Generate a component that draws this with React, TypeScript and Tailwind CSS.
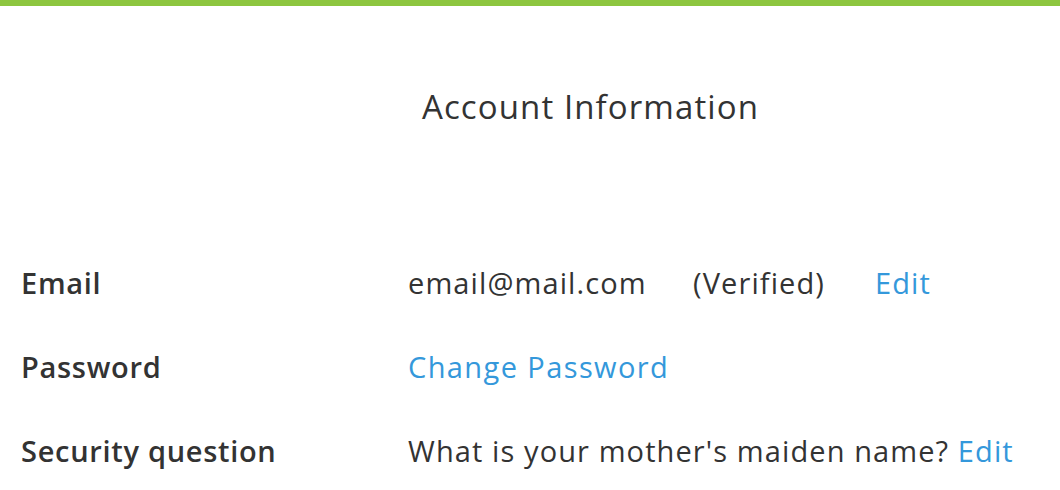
import React from "react";

const rows = [
  { label: "Email" },
  { label: "Password" },
  { label: "Security question" },
];

export default function App() {
  return (
    <div className="h-[490px] w-[1060px] overflow-hidden bg-white text-[#333333]" style={{ fontFamily: "'Open Sans', 'Noto Sans', sans-serif" }}>
      <div className="h-[6px] bg-[#8dc63f]" />

      <div className="flex justify-center pl-[121px] pt-[79px]">
        <h1 className="text-[33px] font-normal leading-[44px] tracking-[1.1px]">Account Information</h1>
      </div>

      <div className="mt-[134px] flex flex-col gap-[44px] pl-[21px]">
        <div className="flex items-center leading-[40px]">
          <div className="w-[387px] text-[29px] font-semibold tracking-[0.7px]">{rows[0].label}</div>
          <div className="flex text-[29px] tracking-[1.1px]">
            <span className="w-[285px]">email@mail.com</span>
            <span className="w-[182px]">(Verified)</span>
            <a className="text-[#3498db]">Edit</a>
          </div>
        </div>

        <div className="flex items-center leading-[40px]">
          <div className="w-[387px] text-[29px] font-semibold tracking-[0.7px]">{rows[1].label}</div>
          <a className="text-[29px] tracking-[1.4px] text-[#3498db]">Change Password</a>
        </div>

        <div className="flex items-center leading-[40px]">
          <div className="w-[387px] text-[29px] font-semibold tracking-[0.7px]">{rows[2].label}</div>
          <div className="text-[29px] tracking-[1.1px]">
            What is your mother's maiden name? <a className="text-[#3498db]">Edit</a>
          </div>
        </div>
      </div>
    </div>
  );
}
